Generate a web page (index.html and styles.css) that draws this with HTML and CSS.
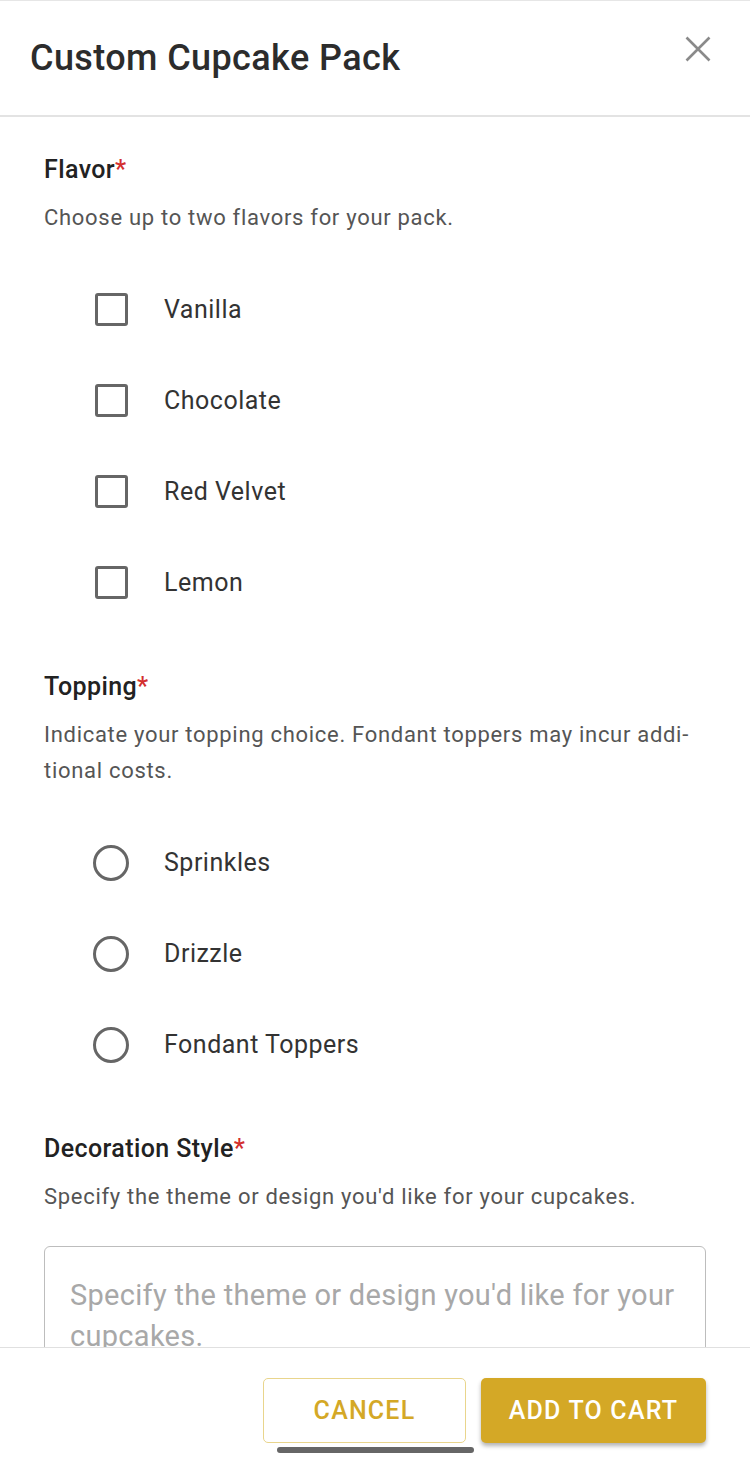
FILE: index.html
```html
<!DOCTYPE html>
<html lang="en">
<head>
<meta charset="utf-8">
<title>Custom Cupcake Pack</title>
<link rel="stylesheet" href="styles.css">
</head>
<body>
<div class="dialog">
  <header class="header">
    <h1 class="title">Custom Cupcake Pack</h1>
    <button class="close" aria-label="Close">
      <svg viewBox="0 0 26 26" width="26" height="26"><path d="M1.5 1.5 L24.5 24.5 M24.5 1.5 L1.5 24.5" stroke="#8a8a8a" stroke-width="2.6" fill="none"/></svg>
    </button>
  </header>
  <main class="content">
    <section class="field">
      <div class="label">Flavor<span class="req">*</span></div>
      <p class="desc">Choose up to two flavors for your pack.</p>
      <ul class="options">
        <li class="option"><span class="slot"><span class="checkbox"></span></span><span class="opt-text">Vanilla</span></li>
        <li class="option"><span class="slot"><span class="checkbox"></span></span><span class="opt-text">Chocolate</span></li>
        <li class="option"><span class="slot"><span class="checkbox"></span></span><span class="opt-text">Red Velvet</span></li>
        <li class="option"><span class="slot"><span class="checkbox"></span></span><span class="opt-text">Lemon</span></li>
      </ul>
    </section>
    <section class="field">
      <div class="label">Topping<span class="req">*</span></div>
      <p class="desc">Indicate your topping choice. Fondant toppers may incur addi-<br>tional costs.</p>
      <ul class="options">
        <li class="option"><span class="slot"><span class="radio"></span></span><span class="opt-text">Sprinkles</span></li>
        <li class="option"><span class="slot"><span class="radio"></span></span><span class="opt-text">Drizzle</span></li>
        <li class="option"><span class="slot"><span class="radio"></span></span><span class="opt-text">Fondant Toppers</span></li>
      </ul>
    </section>
    <section class="field">
      <div class="label">Decoration Style<span class="req">*</span></div>
      <p class="desc">Specify the theme or design you'd like for your cupcakes.</p>
      <textarea class="textbox" placeholder="Specify the theme or design you'd like for your cupcakes."></textarea>
    </section>
  </main>
  <footer class="footer">
    <button class="btn btn-outline">CANCEL</button>
    <button class="btn btn-primary">ADD TO CART</button>
  </footer>
  <div class="home-bar"></div>
</div>
</body>
</html>
```

FILE: styles.css
```css
* { box-sizing: border-box; }
html, body {
  margin: 0;
  padding: 0;
  background: #fff;
}
body {
  width: 750px;
  height: 1471px;
  overflow: hidden;
  font-family: Roboto, "Noto Sans", "Liberation Sans", sans-serif;
  color: #333;
}
.dialog {
  position: relative;
  height: 1471px;
  display: flex;
  flex-direction: column;
}
.header {
  flex: 0 0 auto;
  height: 117px;
  border-top: 1px solid #e6e6e6;
  border-bottom: 2px solid #e3e3e3;
  display: flex;
  align-items: flex-start;
  justify-content: space-between;
  padding: 0 39px 0 30px;
}
.title {
  margin: 37px 0 0;
  font-size: 36px;
  line-height: 40px;
  font-weight: 500;
  color: #2c2c2c;
  letter-spacing: 0.4px;
}
.close {
  margin-top: 35px;
  padding: 0;
  border: 0;
  background: none;
  width: 26px;
  height: 26px;
  display: flex;
}
.content {
  flex: 1 1 auto;
  overflow: hidden;
  padding: 38px 44px 0;
}
.field + .field { margin-top: 44px; }
.label {
  font-size: 25px;
  line-height: 30px;
  font-weight: 500;
  color: #222;
  letter-spacing: 0.4px;
}
.req { color: #d32f2f; }
.desc {
  margin: 15px 0 0;
  font-size: 22px;
  line-height: 36px;
  color: #555;
  letter-spacing: 0.7px;
}
.options {
  list-style: none;
  margin: 28px 0 0;
  padding: 0 0 0 47px;
}
.option {
  height: 91px;
  display: flex;
  align-items: center;
}
.slot {
  width: 40px;
  height: 40px;
  display: flex;
  align-items: center;
  justify-content: center;
}
.checkbox {
  width: 33px;
  height: 33px;
  border: 3px solid #666;
  border-radius: 3px;
}
.radio {
  width: 36px;
  height: 36px;
  border: 3px solid #666;
  border-radius: 50%;
}
.opt-text {
  margin-left: 33px;
  font-size: 25px;
  color: #333;
  letter-spacing: 0.5px;
}
.textbox {
  display: block;
  margin-top: 31px;
  width: 100%;
  height: 170px;
  border: 1px solid #bdbdbd;
  border-radius: 6px;
  padding: 28px 25px;
  font-family: Roboto, "Noto Sans", "Liberation Sans", sans-serif;
  font-size: 29px;
  line-height: 41px;
  letter-spacing: 0.3px;
  resize: none;
  color: #333;
  outline: none;
}
.textbox::placeholder { color: #a8a8a8; }
.footer {
  flex: 0 0 124px;
  border-top: 1px solid #e0e0e0;
  display: flex;
  justify-content: flex-end;
  align-items: flex-start;
  gap: 15px;
  padding: 30px 44px 0;
  background: #fff;
}
.btn {
  height: 65px;
  border-radius: 5px;
  font-family: Roboto, "Noto Sans", "Liberation Sans", sans-serif;
  font-size: 25px;
  font-weight: 500;
  letter-spacing: 1.2px;
  padding: 0;
}
.btn-outline {
  width: 203px;
  background: #fff;
  border: 1px solid #e9d58c;
  color: #d4a826;
}
.btn-primary {
  width: 225px;
  background: #d4a826;
  border: 0;
  color: #fff;
  box-shadow: 0 3px 4px rgba(0, 0, 0, 0.3);
}
.home-bar {
  position: absolute;
  left: 277px;
  top: 1447px;
  width: 197px;
  height: 6px;
  border-radius: 3px;
  background: #666;
}
```
